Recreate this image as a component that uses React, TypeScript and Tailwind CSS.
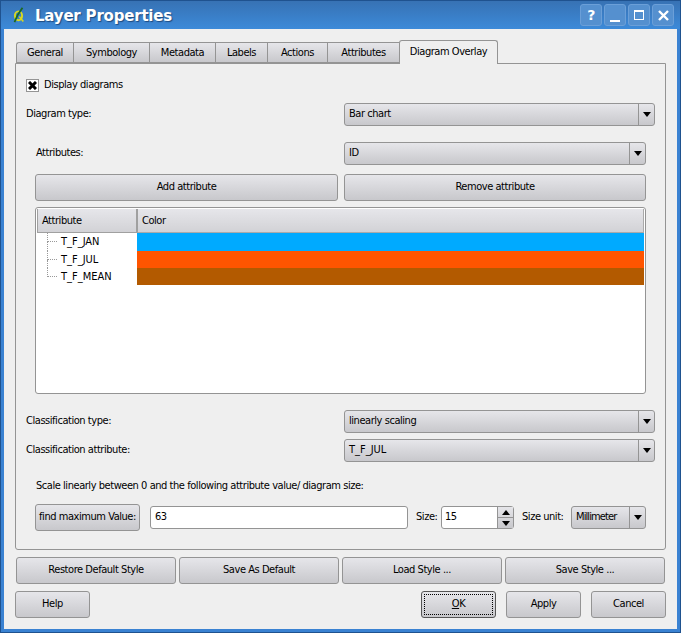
const font = "font-['DejaVu_Sans_Condensed','DejaVu_Sans',sans-serif] text-[11px] tracking-[-0.45px] text-black";

function Btn({ label, className = "" }: { label: React.ReactNode; className?: string }) {
  return (
    <div
      className={`flex h-[27px] items-center justify-center whitespace-nowrap rounded-[3px] border border-[#949494] bg-gradient-to-b from-[#e6e6ea] to-[#c8c8cc] pb-[1px] ${className}`}
    >
      {label}
    </div>
  );
}

function Combo({ value, className = "", textClass = "pt-[1px]" }: { value: string; className?: string; textClass?: string }) {
  return (
    <div
      className={`flex h-[23px] items-stretch rounded-[3px] border border-[#949494] bg-gradient-to-b from-[#e6e6ea] to-[#c8c8cc] ${className}`}
    >
      <div className={`flex flex-1 items-center pl-[4px] ${textClass}`}>{value}</div>
      <div className="flex w-[16px] items-center justify-center border-l border-[#949494]">
        <svg width="8" height="5" viewBox="0 0 8 5">
          <path d="M0 0h8L4 5z" fill="#000" />
        </svg>
      </div>
    </div>
  );
}

function Tab({ label, w, active }: { label: string; w: string; active?: boolean }) {
  if (active) {
    return (
      <div
        className={`relative z-10 -mb-px flex h-[24px] ${w} items-center justify-center rounded-t-[3px] border border-b-0 border-[#949494] bg-[#efefef] pb-[1px]`}
      >
        {label}
      </div>
    );
  }
  return (
    <div
      className={`flex h-[21px] ${w} items-center justify-center border border-r-0 border-[#949494] bg-gradient-to-b from-[#e6e6ea] to-[#c8c8cc] pt-[2px] first:rounded-tl-[3px]`}
    >
      {label}
    </div>
  );
}

function WinBtn({ children }: { children: React.ReactNode }) {
  return (
    <div className="flex h-[22px] w-[22px] items-center justify-center rounded-[3px] border border-[#6b9fd8] bg-[#5590cf]">
      {children}
    </div>
  );
}

function Row({ name, color, h, last }: { name: string; color: string; h: string; last?: boolean }) {
  return (
    <div className={`flex ${h}`}>
      <div className="flex w-[100px] items-center">
        <div className={`ml-[10px] flex w-[10px] ${last ? "h-[9px] self-start" : "h-full"} flex-col`}>
          <div className="h-[9px] border-b border-l border-dotted border-[#999]" />
          {!last && <div className="flex-1 border-l border-dotted border-[#999]" />}
        </div>
        <span className="ml-[4px] pt-[1px] tracking-normal">{name}</span>
      </div>
      <div className={`flex-1 ${color}`} />
    </div>
  );
}

export default function App() {
  return (
    <div className={`flex h-[633px] w-[681px] flex-col border border-[#1f528f] bg-[#3a82d2] ${font}`}>
      {/* Title bar */}
      <div className="flex h-[28px] shrink-0 items-center bg-gradient-to-b from-[#3772b4] to-[#3c8ad9] pl-[11px] pr-[6px]">
        <svg width="13" height="16" viewBox="0 0 16 20">
          <ellipse cx="8" cy="11" rx="4.5" ry="5.5" fill="none" stroke="#d8d820" strokeWidth="2.4" />
          <path d="M13 1 L7 10 L3 19" fill="none" stroke="#1c6a20" strokeWidth="2.2" />
          <path d="M9 12 L14 18" stroke="#d8d820" strokeWidth="2" />
        </svg>
        <span className="ml-[10px] pt-[2px] font-['DejaVu_Sans',sans-serif] text-[15px] font-bold tracking-[-0.2px] text-white [text-shadow:1px_1px_1px_#1d4a80]">
          Layer Properties
        </span>
        <div className="ml-auto flex gap-[2px]">
          <WinBtn>
            <span className="font-['DejaVu_Sans',sans-serif] text-[14px] font-bold text-white">?</span>
          </WinBtn>
          <WinBtn>
            <div className="mt-[11px] h-[2px] w-[10px] bg-white" />
          </WinBtn>
          <WinBtn>
            <div className="h-[10px] w-[10px] border border-t-2 border-white" />
          </WinBtn>
          <WinBtn>
            <svg width="11" height="11" viewBox="0 0 11 11">
              <path d="M1 1l9 9M10 1l-9 9" stroke="#fff" strokeWidth="2.4" />
            </svg>
          </WinBtn>
        </div>
      </div>

      {/* Dialog body */}
      <div className="mx-[3px] flex h-[600px] flex-col bg-[#efefef] pl-[11px] pr-[11px] pt-[11px]">
        <div className="flex items-end pl-px">
          <Tab label="General" w="w-[57px]" />
          <Tab label="Symbology" w="w-[76px]" />
          <Tab label="Metadata" w="w-[66px]" />
          <Tab label="Labels" w="w-[52px]" />
          <Tab label="Actions" w="w-[60px]" />
          <Tab label="Attributes" w="w-[72px]" />
          <Tab label="Diagram Overlay" w="w-[99px]" active />
        </div>

        {/* Tab pane */}
        <div className="flex h-[487px] flex-col rounded-b-[3px] border border-[#949494] pl-[10px] pr-[10px]">
          <div className="mt-[14px] flex h-[15px] items-center">
            <div className="flex h-[13px] w-[13px] items-center justify-center border border-[#949494] bg-white">
              <svg width="9" height="9" viewBox="0 0 9 9">
                <path d="M1 1l7 7M8 1l-7 7" stroke="#000" strokeWidth="3" />
              </svg>
            </div>
            <span className="ml-[5px]">Display diagrams</span>
          </div>

          <div className="mt-[10px] flex items-center justify-between">
            <span>Diagram type:</span>
            <Combo value="Bar chart" className="w-[311px]" textClass="" />
          </div>

          <div className="mt-[16px] flex items-center justify-between pl-[10px] pr-[9px]">
            <span>Attributes:</span>
            <Combo value="ID" className="w-[302px]" textClass="" />
          </div>

          <div className="mt-[9px] flex justify-between pl-[9px] pr-[9px]">
            <Btn label="Add attribute" className="w-[303px]" />
            <Btn label="Remove attribute" className="w-[302px]" />
          </div>

          {/* Attribute table */}
          <div className="ml-[9px] mr-[9px] mt-[6px] h-[187px] rounded-[3px] border border-[#949494] bg-white p-px">
            <div className="flex h-[24px]">
              <div className="flex w-[101px] items-center border-x border-b border-r-2 border-[#a0a0a0] bg-gradient-to-b from-[#e6e6ea] to-[#d2d2d6] pl-[4px] pt-[2px]">
                Attribute
              </div>
              <div className="flex flex-1 items-center border-r border-b border-[#aaa] bg-gradient-to-b from-[#e6e6ea] to-[#d2d2d6] pl-[4px] pt-[2px]">
                Color
              </div>
            </div>
            <Row name="T_F_JAN" color="bg-[#00aaff]" h="h-[18px]" />
            <Row name="T_F_JUL" color="bg-[#ff5500]" h="h-[17px]" />
            <Row name="T_F_MEAN" color="bg-[#b35a00]" h="h-[17px]" last />
          </div>

          <div className="mt-[16px] flex items-center justify-between">
            <span>Classification type:</span>
            <Combo value="linearly scaling" className="w-[311px]" textClass="" />
          </div>
          <div className="mt-[6px] flex items-center justify-between">
            <span>Classification attribute:</span>
            <Combo value="T_F_JUL" className="w-[311px] tracking-normal" textClass="" />
          </div>

          <div className="ml-[10px] mt-[16px] h-[16px] leading-[16px]">
            Scale linearly between 0 and the following attribute value/ diagram size:
          </div>

          <div className="mt-[10px] flex items-center pl-[9px]">
            <Btn label="find maximum Value:" className="w-[105px]" />
            <div className="ml-[10px] flex h-[23px] w-[258px] items-center rounded-[3px] border border-[#949494] bg-white pl-[4px]">
              63
            </div>
            <span className="ml-[8px] w-[25px]">Size:</span>
            <div className="flex h-[23px] w-[73px] rounded-[3px] border border-[#949494] bg-white">
              <div className="flex flex-1 items-center pl-[3px]">15</div>
              <div className="flex w-[16px] flex-col border-l border-[#949494] bg-gradient-to-b from-[#e6e6ea] to-[#c8c8cc]">
                <div className="flex flex-1 items-center justify-center border-b border-[#949494]">
                  <svg width="8" height="5" viewBox="0 0 8 5">
                    <path d="M0 5h8L4 0z" fill="#000" />
                  </svg>
                </div>
                <div className="flex flex-1 items-center justify-center">
                  <svg width="8" height="5" viewBox="0 0 8 5">
                    <path d="M0 0h8L4 5z" fill="#000" />
                  </svg>
                </div>
              </div>
            </div>
            <span className="ml-[8px] w-[49px]">Size unit:</span>
            <Combo value="Millimeter" className="w-[75px] tracking-[-0.9px]" textClass="" />
          </div>
        </div>

        <div className="mt-[7px] flex justify-between px-px">
          <Btn label="Restore Default Style" className="w-[160px]" />
          <Btn label="Save As Default" className="w-[160px]" />
          <Btn label="Load Style ..." className="w-[160px]" />
          <Btn label="Save Style ..." className="w-[160px]" />
        </div>

        <div className="mt-[7px] flex">
          <Btn label="Help" className="w-[75px]" />
          <div className="ml-[331px] flex h-[27px] w-[75px] items-center justify-center rounded-[3px] border border-[#555] bg-gradient-to-b from-[#e6e6ea] to-[#c8c8cc] p-[2px]">
            <div className="flex h-full w-full items-center justify-center border border-dotted border-black pb-[1px]">
              <span className="underline">O</span>K
            </div>
          </div>
          <Btn label="Apply" className="ml-[10px] w-[75px]" />
          <Btn label="Cancel" className="ml-[10px] w-[75px]" />
        </div>
      </div>
    </div>
  );
}
